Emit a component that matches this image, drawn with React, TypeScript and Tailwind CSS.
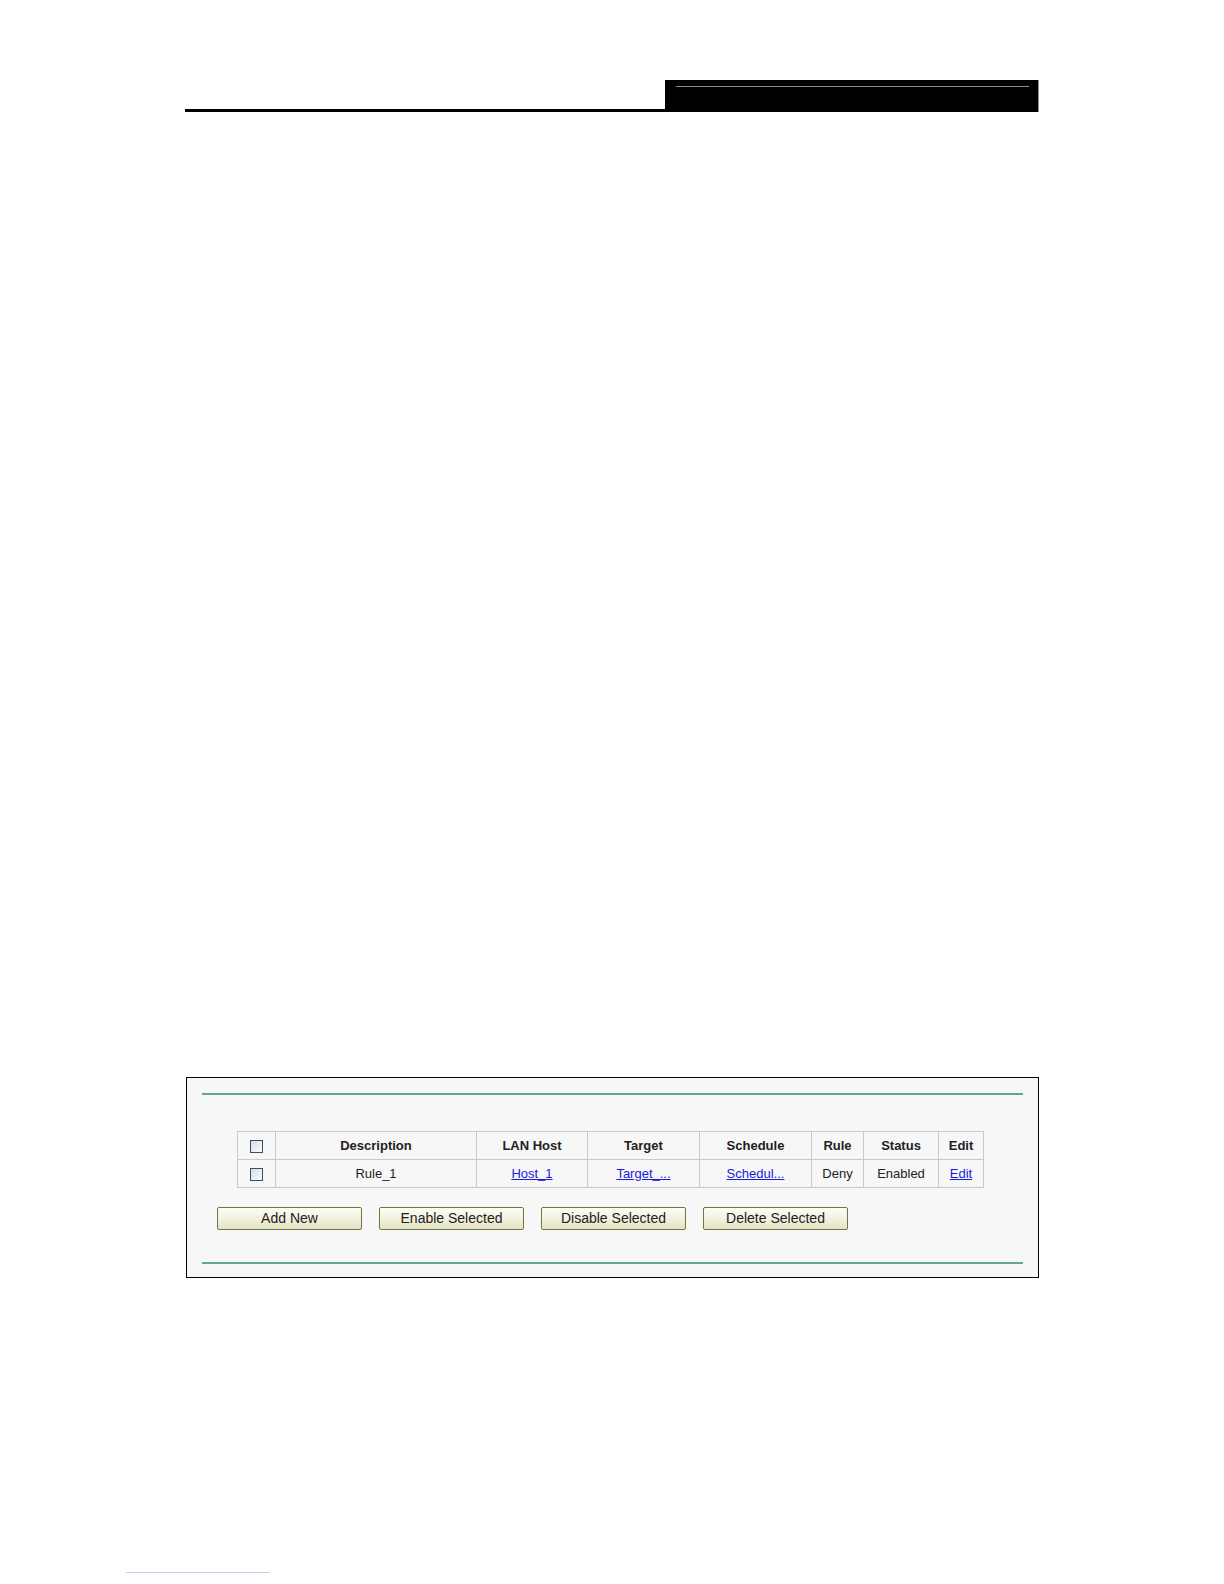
import React from "react";

const Check = () => (
  <span className="inline-block align-middle w-[13px] h-[13px] border border-[#2f4f6f] bg-gradient-to-br from-[#dcdcdc] to-[#fbfbfb]" />
);

const Btn = ({ children }: { children: React.ReactNode }) => (
  <button className="w-[145px] h-[23px] border border-[#6a7a3a] rounded-[2px] bg-gradient-to-b from-[#fffef6] to-[#e7e3c8] text-[14px] leading-[21px] text-[#222] font-['Liberation_Sans',Arial,sans-serif]">
    {children}
  </button>
);

const Link = ({ children }: { children: React.ReactNode }) => (
  <span className="text-[#1a1ae0] underline">{children}</span>
);

export default function App() {
  const th = "border border-[#c9c9c9] font-bold text-[13px] text-[#222] text-center p-0";
  const td = "border border-[#c9c9c9] text-[13px] text-[#222] text-center p-0";
  return (
    <div className="w-[1224px] h-[1584px] bg-white overflow-hidden font-['Liberation_Sans',Arial,sans-serif]">
      <header className="pt-[80px] pl-[185px] w-[1039px] flex items-end">
        <div className="flex-1 h-[3px] bg-black" />
        <div className="w-[374px] h-[32px] bg-black pt-[6px] pl-[11px] pr-[9px] border-r border-[#8a8a8a]">
          <div className="h-px bg-[#8c8c8c]" />
        </div>
      </header>

      <section className="mt-[965px] ml-[186px] w-[853px] h-[201px] border border-black bg-[#f7f7f7] pt-[15px] px-[15px]">
        <div className="h-[2px] bg-[#67a68a]" />
        <table className="mt-[36px] ml-[35px] border-collapse table-fixed w-[747px]">
          <colgroup>
            <col className="w-[38px]" />
            <col className="w-[201px]" />
            <col className="w-[111px]" />
            <col className="w-[112px]" />
            <col className="w-[112px]" />
            <col className="w-[52px]" />
            <col className="w-[75px]" />
            <col className="w-[45px]" />
          </colgroup>
          <thead>
            <tr className="h-[28px]">
              <th className={th}><Check /></th>
              <th className={th}>Description</th>
              <th className={th}>LAN Host</th>
              <th className={th}>Target</th>
              <th className={th}>Schedule</th>
              <th className={th}>Rule</th>
              <th className={th}>Status</th>
              <th className={th}>Edit</th>
            </tr>
          </thead>
          <tbody>
            <tr className="h-[28px]">
              <td className={td}><Check /></td>
              <td className={td}>Rule_1</td>
              <td className={td}><Link>Host_1</Link></td>
              <td className={td}><Link>Target_...</Link></td>
              <td className={td}><Link>Schedul...</Link></td>
              <td className={td}>Deny</td>
              <td className={td}>Enabled</td>
              <td className={td}><Link>Edit</Link></td>
            </tr>
          </tbody>
        </table>
        <div className="mt-[19px] ml-[15px] flex gap-[17px]">
          <Btn>Add New</Btn>
          <Btn>Enable Selected</Btn>
          <Btn>Disable Selected</Btn>
          <Btn>Delete Selected</Btn>
        </div>
        <div className="mt-[32px] h-[2px] bg-[#67a68a]" />
      </section>

      <div className="mt-[294px] ml-[126px] w-[144px] h-px bg-[#c3cdf0]" />
    </div>
  );
}
